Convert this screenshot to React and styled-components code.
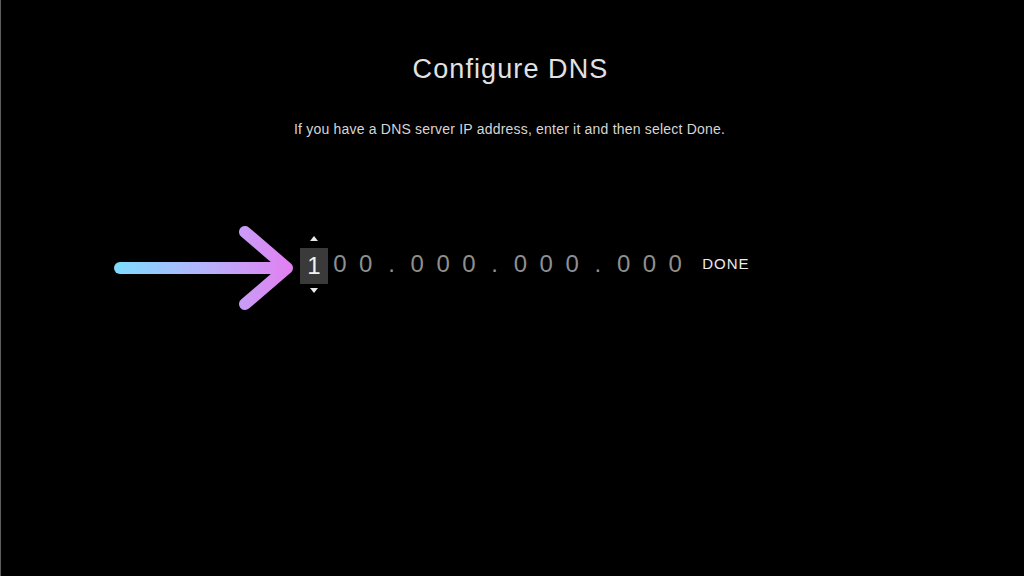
import React from 'react';
import styled, { createGlobalStyle } from 'styled-components';

const GlobalStyle = createGlobalStyle`
  html, body {
    margin: 0;
    padding: 0;
    background: #000;
  }
  body {
    font-family: 'Liberation Sans', Arial, sans-serif;
  }
`;

const Screen = styled.div`
  width: 1024px;
  height: 576px;
  box-sizing: border-box;
  background: #000;
  border-left: 1px solid #5e5e5e;
  padding-top: 56px;
  display: flex;
  flex-direction: column;
  overflow: hidden;
`;

const Title = styled.h1`
  margin: 0;
  text-align: center;
  font-size: 27px;
  line-height: 27px;
  font-weight: 400;
  letter-spacing: 1.1px;
  color: #e2e2e2;
  padding-right: 4px;
`;

const Subtitle = styled.p`
  margin: 39px 0 0;
  text-align: center;
  font-size: 14px;
  line-height: 14px;
  letter-spacing: 0.2px;
  color: #d6d6d6;
  padding-right: 6px;
`;

const EntryRow = styled.div`
  margin-top: 80px;
  padding-left: 103px;
  display: flex;
  align-items: center;
`;

const Pointer = styled.svg`
  flex: none;
  margin-right: 5px;
`;

const Digits = styled.div`
  display: flex;
  align-items: center;
`;

const Slot = styled.span`
  width: 25.8px;
  flex: none;
  text-align: center;
  font-size: 24px;
  line-height: 36px;
  color: #8f8f8f;
`;

const ActiveSlot = styled.div`
  width: 28px;
  margin: 0 -1px;
  flex: none;
  display: flex;
  flex-direction: column;
  align-items: center;
  gap: 7px;
`;

const Caret = styled.span`
  width: 0;
  height: 0;
  border-left: 4px solid transparent;
  border-right: 4px solid transparent;
  ${({ $down }) =>
    $down
      ? 'border-top: 5px solid #e8e8e8; margin-top: -3px;'
      : 'border-bottom: 5px solid #e8e8e8;'}
`;

const ActiveBox = styled.span`
  width: 28px;
  height: 36px;
  background: #3a3a3a;
  color: #f2f2f2;
  font-size: 24px;
  line-height: 36px;
  text-align: center;
`;

const DoneButton = styled.span`
  margin-left: 14px;
  font-size: 15px;
  letter-spacing: 1px;
  color: #ececec;
  padding-bottom: 1px;
`;

const digits = '100.000.000.000'.split('');

const App = () => {
  return (
    <Screen>
      <GlobalStyle />
      <Title>Configure DNS</Title>
      <Subtitle>
        If you have a DNS server IP address, enter it and then select Done.
      </Subtitle>
      <EntryRow>
        <Pointer width='192' height='96' viewBox='0 0 192 96'>
          <defs>
            <linearGradient id='arrowFill' x1='16' y1='0' x2='186' y2='0' gradientUnits='userSpaceOnUse'>
              <stop offset='0' stopColor='#80d9ff' />
              <stop offset='0.5' stopColor='#b6b2fb' />
              <stop offset='1' stopColor='#e280f2' />
            </linearGradient>
          </defs>
          <g
            fill='none'
            stroke='url(#arrowFill)'
            strokeWidth='12'
            strokeLinecap='round'
            strokeLinejoin='round'
          >
            <path d='M16 52 H182' />
            <path d='M141 16 L183 52 L141 88' />
          </g>
        </Pointer>
        <Digits>
          {digits.map((ch, index) =>
            index === 0 ? (
              <ActiveSlot key={index}>
                <Caret />
                <ActiveBox>{ch}</ActiveBox>
                <Caret $down />
              </ActiveSlot>
            ) : (
              <Slot key={index}>{ch}</Slot>
            )
          )}
        </Digits>
        <DoneButton>DONE</DoneButton>
      </EntryRow>
    </Screen>
  );
};

export default App;
